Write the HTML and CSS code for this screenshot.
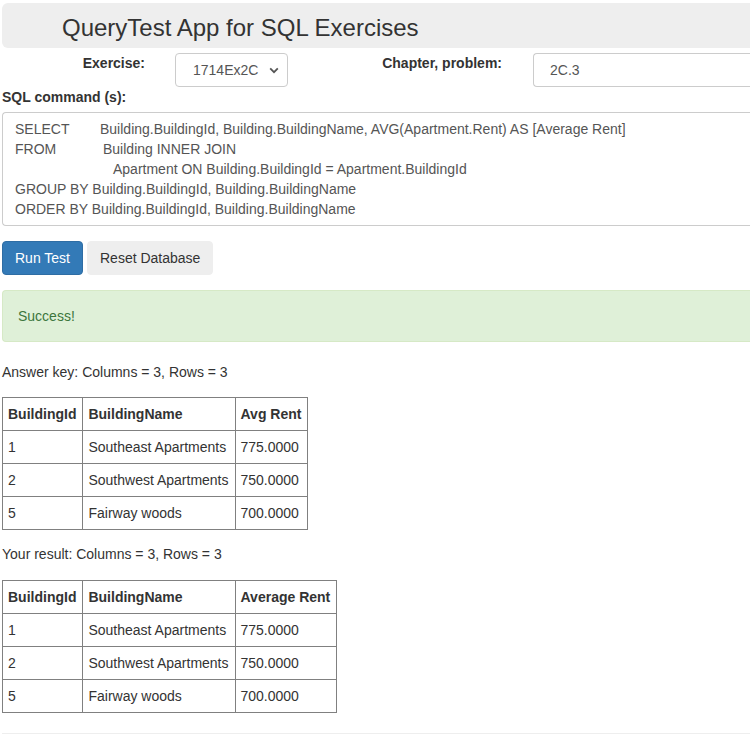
FILE: index.html
```html
<!DOCTYPE html>
<html>
<head>
<meta charset="utf-8">
<title>QueryTest App</title>
<link rel="stylesheet" href="styles.css">
</head>
<body>
<div class="page">
  <div class="jumbo">QueryTest App for SQL Exercises</div>

  <div class="form-row">
    <div class="lbl-col lbl-col-a"><label class="lbl">Exercise:</label></div>
    <div class="sel-col">
      <div class="select">
        <span>1714Ex2C</span>
        <svg class="caret" width="10" height="7" viewBox="0 0 10 7"><path d="M1.2 1.4 L5 5.2 L8.8 1.4" fill="none" stroke="#555" stroke-width="1.8"/></svg>
      </div>
    </div>
    <div class="lbl-col lbl-col-b"><label class="lbl">Chapter, problem:</label></div>
    <div class="inp-col"><div class="input">2C.3</div></div>
  </div>

  <label class="lbl sql-lbl">SQL command (s):</label>
  <div class="textarea">
    <div class="line"><span class="kw kw-select">SELECT</span>Building.BuildingId, Building.BuildingName, AVG(Apartment.Rent) AS [Average Rent]</div>
    <div class="line"><span class="kw kw-from">FROM</span>Building INNER JOIN</div>
    <div class="line"><span class="kw kw-indent"></span>Apartment ON Building.BuildingId = Apartment.BuildingId</div>
    <div class="line">GROUP BY Building.BuildingId, Building.BuildingName</div>
    <div class="line">ORDER BY Building.BuildingId, Building.BuildingName</div>
  </div>

  <div class="buttons">
    <button class="btn btn-primary">Run Test</button>
    <button class="btn btn-default">Reset Database</button>
  </div>

  <div class="alert">Success!</div>

  <p class="caption">Answer key: Columns = 3, Rows = 3</p>
  <table class="grid">
    <tr><th>BuildingId</th><th>BuildingName</th><th>Avg Rent</th></tr>
    <tr><td>1</td><td>Southeast Apartments</td><td>775.0000</td></tr>
    <tr><td>2</td><td>Southwest Apartments</td><td>750.0000</td></tr>
    <tr><td>5</td><td>Fairway woods</td><td>700.0000</td></tr>
  </table>

  <p class="caption caption2">Your result: Columns = 3, Rows = 3</p>
  <table class="grid">
    <tr><th>BuildingId</th><th>BuildingName</th><th>Average Rent</th></tr>
    <tr><td>1</td><td>Southeast Apartments</td><td>775.0000</td></tr>
    <tr><td>2</td><td>Southwest Apartments</td><td>750.0000</td></tr>
    <tr><td>5</td><td>Fairway woods</td><td>700.0000</td></tr>
  </table>

  <hr class="rule">
</div>
</body>
</html>
```

FILE: styles.css
```css
html, body {
  margin: 0;
  padding: 0;
  overflow: hidden;
  background: #fff;
}
body {
  font-family: "Liberation Sans", Arial, Helvetica, sans-serif;
  font-size: 14px;
  line-height: 20px;
  color: #333;
}
.page {
  width: 748px;
  padding: 3px 0 0 2px;
}
.jumbo {
  background: #eee;
  border-radius: 6px 0 0 6px;
  height: 40px;
  padding: 5px 0 0 60px;
  font-size: 24px;
  line-height: 40px;
  color: #333;
}
.form-row {
  display: flex;
  margin-top: 5px;
  height: 34px;
}
.lbl {
  font-weight: bold;
  display: block;
}
.lbl-col {
  flex: none;
  text-align: right;
  padding-right: 15px;
}
.lbl-col-a { width: 143px; }
.lbl-col-b { width: 145px; }
.sel-col {
  flex: none;
  padding-left: 15px;
  width: 182px;
}
.select {
  box-sizing: border-box;
  width: 113px;
  height: 34px;
  border: 1px solid #ccc;
  border-radius: 4px;
  display: flex;
  align-items: center;
  padding: 0 8px 0 17px;
  justify-content: space-between;
  color: #555;
}
.caret { display: block; }
.inp-col {
  padding-left: 16px;
  flex: 1;
  min-width: 0;
}
.input {
  box-sizing: border-box;
  height: 34px;
  border: 1px solid #ccc;
  border-right: 0;
  border-radius: 4px 0 0 4px;
  padding: 6px 16px;
  color: #555;
}
.sql-lbl {
  margin-top: 0;
  margin-bottom: 5px;
}
.textarea {
  border: 1px solid #ccc;
  border-right: 0;
  border-radius: 4px 0 0 4px;
  padding: 6px 12px;
  color: #555;
  white-space: nowrap;
  overflow: hidden;
}
.line { height: 20px; }
.kw { display: inline-block; }
.kw-select { width: 85px; }
.kw-from { width: 88px; }
.kw-indent { width: 98px; }
.buttons {
  margin-top: 15px;
  display: flex;
  gap: 4px;
}
.btn {
  font-family: inherit;
  font-size: 14px;
  line-height: 20px;
  padding: 6px 12px;
  border-radius: 4px;
  border: 1px solid transparent;
  margin: 0;
}
.btn-primary {
  background: #337ab7;
  border-color: #2e6da4;
  color: #fff;
}
.btn-default {
  background: #eee;
  border-color: #eee;
  color: #333;
}
.alert {
  margin-top: 15px;
  background: #dff0d8;
  border: 1px solid #d6e9c6;
  border-right: 0;
  border-radius: 4px 0 0 4px;
  padding: 15px;
  color: #3c763d;
  margin-bottom: 20px;
}
.caption {
  margin: 0 0 15px;
}
.caption2 {
  margin-top: 14px;
  margin-bottom: 16px;
}
.grid {
  border-collapse: collapse;
  border: 1px solid #808080;
}
.grid th, .grid td {
  border: 1px solid #808080;
  padding: 6px 6px 6px 5px;
  text-align: left;
  line-height: 20px;
}
.grid th { font-weight: bold; }
.rule {
  margin: 20px 0 0;
  border: 0;
  border-top: 1px solid #eee;
}
```
